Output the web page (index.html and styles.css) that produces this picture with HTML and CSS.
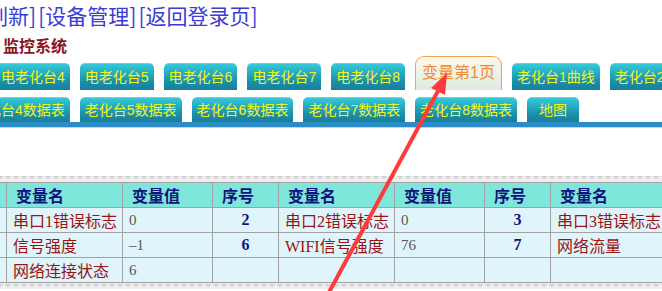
FILE: index.html
```html
<!DOCTYPE html>
<html lang="zh-CN">
<head>
    <meta charset="UTF-8">
    <meta name="viewport" content="width=device-width, initial-scale=1.0">
    <title>监控系统</title>
    <link rel="stylesheet" href="styles.css">
</head>
<body>
    <div class="links">
        <a href="#">[刷新]</a><a href="#">[设备管理]</a><a href="#">[返回登录页]</a>
    </div>
    <div class="title">监控系统</div>

    <div class="tabs tabs-top">
        <a class="tab" href="#">电老化台4</a>
        <a class="tab" href="#">电老化台5</a>
        <a class="tab" href="#">电老化台6</a>
        <a class="tab" href="#">电老化台7</a>
        <a class="tab" href="#">电老化台8</a>
        <a class="tab active" href="#">变量第1页</a>
        <a class="tab" href="#">老化台1曲线</a>
        <a class="tab" href="#">老化台2曲线</a>
    </div>
    <div class="tabs tabs-bottom">
        <a class="tab" href="#">老化台4数据表</a>
        <a class="tab" href="#">老化台5数据表</a>
        <a class="tab" href="#">老化台6数据表</a>
        <a class="tab" href="#">老化台7数据表</a>
        <a class="tab" href="#">老化台8数据表</a>
        <a class="tab wide" href="#">地图</a>
    </div>
    <div class="tab-bar"></div>

    <div class="panel">
        <table class="vars">
            <colgroup>
                <col class="c-no"><col class="c-name"><col class="c-val">
                <col class="c-no"><col class="c-name"><col class="c-val">
                <col class="c-no"><col class="c-name"><col class="c-val">
                <col class="c-no"><col class="c-name"><col class="c-val">
            </colgroup>
            <tr>
                <th>序号</th><th>变量名</th><th>变量值</th>
                <th>序号</th><th>变量名</th><th>变量值</th>
                <th>序号</th><th>变量名</th><th>变量值</th>
                <th>序号</th><th>变量名</th><th>变量值</th>
            </tr>
            <tr>
                <td class="no">1</td><td class="name">串口1错误标志</td><td class="val">0</td>
                <td class="no">2</td><td class="name">串口2错误标志</td><td class="val">0</td>
                <td class="no">3</td><td class="name">串口3错误标志</td><td class="val">0</td>
                <td class="no">4</td><td class="name">串口4错误标志</td><td class="val">0</td>
            </tr>
            <tr>
                <td class="no">5</td><td class="name">信号强度</td><td class="val">–1</td>
                <td class="no">6</td><td class="name">WIFI信号强度</td><td class="val">76</td>
                <td class="no">7</td><td class="name">网络流量</td><td class="val">0</td>
                <td class="no">8</td><td class="name">运行时间</td><td class="val">0</td>
            </tr>
            <tr>
                <td class="no">9</td><td class="name">网络连接状态</td><td class="val">6</td>
                <td class="no"></td><td class="name"></td><td class="val"></td>
                <td class="no"></td><td class="name"></td><td class="val"></td>
                <td class="no"></td><td class="name"></td><td class="val"></td>
            </tr>
        </table>
    </div>

    <!-- arrow drawn over the screenshot -->
    <svg class="arrow" width="662" height="291" viewBox="0 0 662 291">
        <line x1="327" y1="296" x2="438" y2="91" stroke="#ff3a3a" stroke-width="4"/>
        <polygon points="447,73 431,88 445,95" fill="#ff3a3a"/>
    </svg>
</body>
</html>
```

FILE: styles.css
```css
html, body {
    overflow: hidden;
}

body {
    margin: 0;
    position: relative;
    width: 662px;
    height: 291px;
    background-color: #ffffff;
    font-family: "Liberation Sans", "Noto Sans CJK SC", sans-serif;
}

.links {
    margin-left: -20px;
    height: 30px;
    line-height: 30px;
    font-size: 21px;
    font-family: "Noto Sans CJK SC", sans-serif;
    white-space: nowrap;
}

.links a {
    margin-right: 2px;
    color: #3b3bd6;
    text-decoration: none;
}

.title {
    margin-top: 5px;
    padding-left: 3px;
    line-height: 20px;
    font-size: 16px;
    font-weight: bold;
    color: #8c1420;
    font-family: "Noto Sans CJK SC", sans-serif;
}

.tabs {
    display: flex;
    align-items: flex-end;
    gap: 10px;
    white-space: nowrap;
}

.tabs-top {
    margin-left: -4px;
    margin-top: 1px;
    height: 34px;
}

.tabs-bottom {
    margin-left: -32px;
    margin-top: 7px;
}

.tab {
    flex-shrink: 0;
    display: block;
    height: 26px;
    line-height: 26px;
    padding: 0 5px;
    font-size: 14px;
    color: #f4f41a;
    text-decoration: none;
    background: linear-gradient(#34c8d8, #1a8ea8 70%, #167f9c);
    border-top: 1px solid #5fd6e2;
    border-radius: 5px 5px 0 0;
}

.tabs-bottom .tab {
    height: 24px;
    line-height: 24px;
}

.tab.wide {
    padding: 0 12px;
}

.tab.active {
    height: 33px;
    line-height: 31px;
    padding: 0 6px;
    font-size: 16px;
    color: #f08a32;
    border: 1px solid #f2a24c;
    border-bottom: none;
    border-radius: 9px 9px 0 0;
    background: linear-gradient(#fdf8ec, #dfeadf);
}

.tab-bar {
    height: 5px;
    background-color: #2c8dc6;
    border-bottom: 1px solid #b4d9ee;
}

.panel {
    margin-top: 48px;
    padding: 6px 0;
    background-color: #eeeeee;
    background-image: linear-gradient(135deg, #d4d4d4 25%, transparent 25%),
                      linear-gradient(225deg, #d4d4d4 25%, transparent 25%);
    background-size: 8px 6px;
}

.vars {
    margin-left: -60px;
    table-layout: fixed;
    width: 1088px;
    border-collapse: collapse;
    border: 1px solid #4a4a4a;
}

.c-no { width: 66px; }
.c-name { width: 116px; }
.c-val { width: 90px; }

.vars th,
.vars td {
    height: 24px;
    padding: 0 0 0 6px;
    border: 1px solid #a2a2a2;
    white-space: nowrap;
    overflow: hidden;
    text-align: left;
}

.vars th {
    padding-left: 9px;
    background-color: #7fe6dc;
    color: #12127e;
    font-size: 16px;
    font-family: "Noto Sans CJK SC", sans-serif;
    font-weight: bold;
}

.vars td {
    background-color: #dff5fb;
    font-size: 16px;
    font-family: "Liberation Serif", "Noto Sans CJK SC", serif;
}

.vars td.name {
    color: #9a1414;
}

.vars td.val {
    color: #555555;
    font-size: 15px;
}

.vars td.no {
    padding: 0;
    text-align: center;
    color: #12127e;
    font-weight: bold;
}

.arrow {
    position: absolute;
    top: 0;
    left: 0;
    pointer-events: none;
}
```
